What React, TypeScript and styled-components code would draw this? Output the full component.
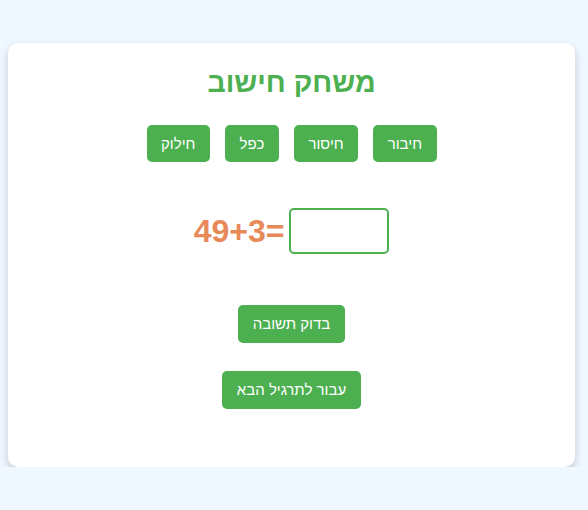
import React, { useState } from "react";
import styled, { createGlobalStyle } from "styled-components";

const GlobalStyle = createGlobalStyle`
  html, body {
    margin: 0;
    padding: 0;
    background: #f0f8ff;
  }
  body {
    font-family: "Liberation Sans", Arial, sans-serif;
  }
`;

const Page = styled.div`
  padding: 43px 13px 0 8px;
`;

const Card = styled.div`
  direction: rtl;
  width: 567px;
  height: 424px;
  box-sizing: border-box;
  background: #ffffff;
  border-radius: 10px;
  box-shadow: 0 4px 8px rgba(0, 0, 0, 0.2);
  display: flex;
  flex-direction: column;
  align-items: center;
  padding-top: 23px;
`;

const Title = styled.h1`
  margin: 0;
  color: #4caf50;
  font-size: 28.5px;
  font-weight: bold;
  line-height: 32px;
`;

const OpRow = styled.div`
  display: flex;
  gap: 15px;
  margin-top: 27px;
`;

const Button = styled.button`
  font-family: "Liberation Sans", Arial, sans-serif;
  background: #4caf50;
  color: #ffffff;
  border: none;
  border-radius: 5px;
  font-size: 15px;
  line-height: 17px;
  padding: 10px 14.5px;
  cursor: pointer;
`;

const Equation = styled.div`
  display: flex;
  align-items: center;
  direction: ltr;
  gap: 5px;
  margin-top: 46px;
`;

const Problem = styled.span`
  color: #e8895a;
  font-size: 32px;
  font-weight: bold;
`;

const Answer = styled.input`
  width: 100px;
  height: 46px;
  box-sizing: border-box;
  border: 2px solid #4caf50;
  border-radius: 5px;
  font-size: 24px;
  text-align: center;
  outline: none;
`;

const ActionButton = styled(Button)<{ $gap: number }>`
  margin-top: ${(p) => p.$gap}px;
  line-height: 18px;
  padding: 10px 15px;
`;

export default function App() {
  const [value, setValue] = useState("");
  return (
    <>
      <GlobalStyle />
      <Page>
        <Card>
          <Title>משחק חישוב</Title>
          <OpRow>
            <Button>חיבור</Button>
            <Button>חיסור</Button>
            <Button>כפל</Button>
            <Button>חילוק</Button>
          </OpRow>
          <Equation>
            <Problem>49+3=</Problem>
            <Answer value={value} onChange={(e) => setValue(e.target.value)} />
          </Equation>
          <ActionButton $gap={51}>בדוק תשובה</ActionButton>
          <ActionButton $gap={28}>עבור לתרגיל הבא</ActionButton>
        </Card>
      </Page>
    </>
  );
}
